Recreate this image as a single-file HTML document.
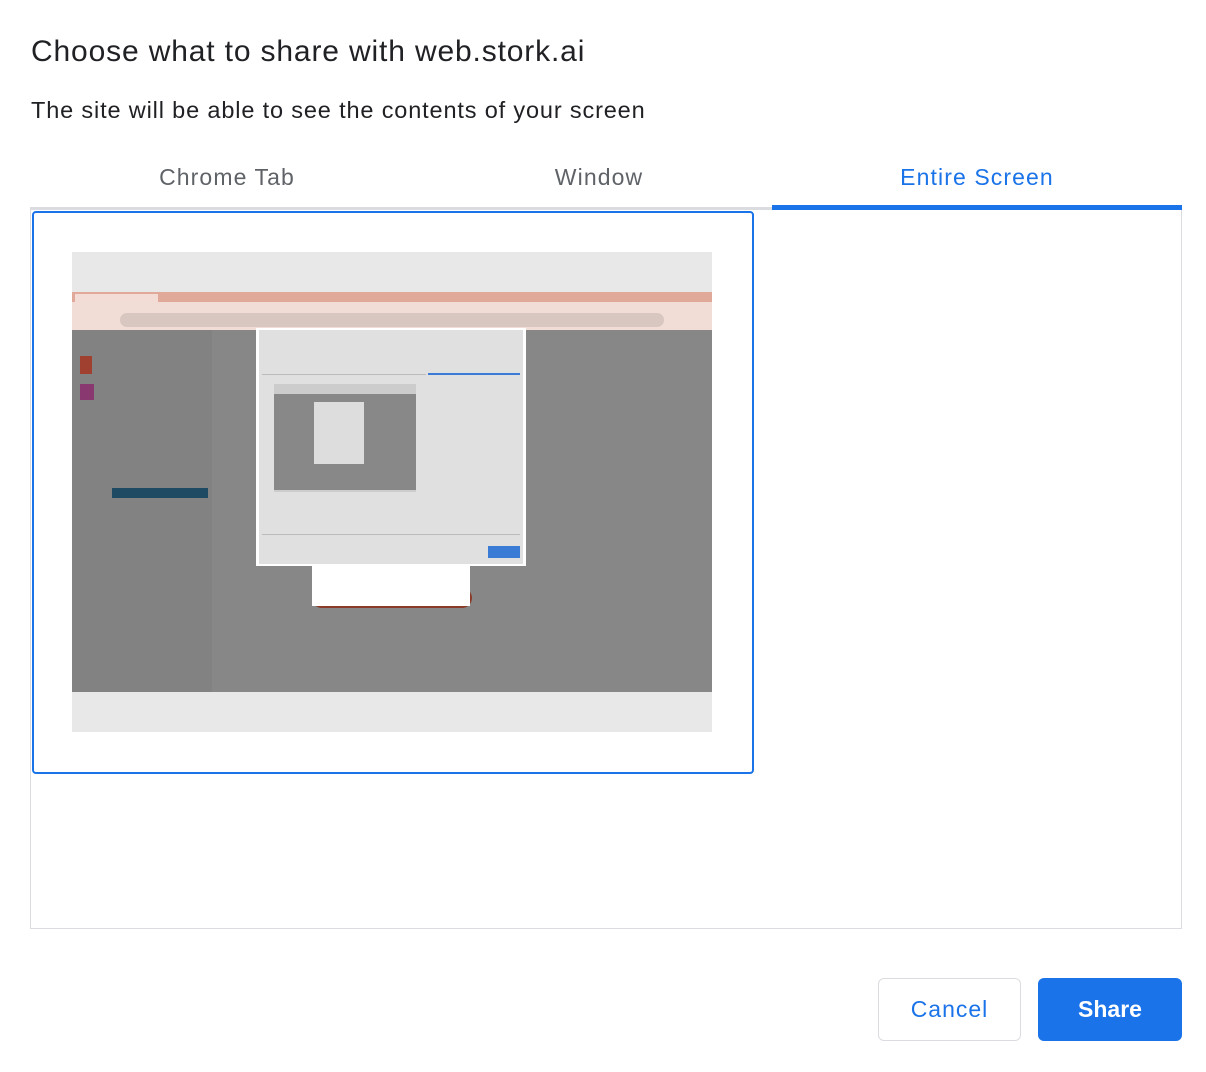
<!DOCTYPE html>
<html><head><meta charset="utf-8"><style>
body{margin:0;width:1206px;height:1072px;background:#fff;font-family:"Liberation Sans",sans-serif;position:relative;overflow:hidden}
.a{position:absolute}
h1{position:absolute;left:31px;top:35px;margin:0;font-size:30px;letter-spacing:0.85px;font-weight:normal;color:#202124}
.sub{left:31px;top:97px;font-size:23.5px;letter-spacing:0.85px;color:#202124}
.tab{top:164px;font-size:23px;letter-spacing:1.1px;color:#5f6368;width:400px;text-align:center}
</style></head><body>
<h1>Choose what to share with web.stork.ai</h1>
<div class="a sub">The site will be able to see the contents of your screen</div>
<div class="a tab" style="left:27px">Chrome Tab</div>
<div class="a tab" style="left:399px">Window</div>
<div class="a tab" style="left:777px;color:#1a73e8">Entire Screen</div>
<div class="a" style="left:30px;top:207px;width:742px;height:3px;background:#dadce0"></div>
<div class="a" style="left:772px;top:205px;width:410px;height:5px;background:#1a73e8"></div>
<div class="a" style="left:30px;top:210px;width:1150px;height:718px;border:1px solid #dadce0;border-top:none"></div>
<div class="a" style="left:32px;top:211px;width:718px;height:559px;border:2px solid #1a73e8;border-radius:4px"></div>
<div class="a" style="left:72px;top:252px;width:640px;height:480px;background:#e8e8e8;overflow:hidden">
 <div class="a" style="left:0;top:40px;width:640px;height:10px;background:#e1a99a"></div>
 <div class="a" style="left:3px;top:42px;width:83px;height:8px;background:#f3dcd6"></div>
 <div class="a" style="left:0;top:50px;width:640px;height:28px;background:#f2dcd6"></div>
 <div class="a" style="left:48px;top:61px;width:544px;height:14px;background:#d8c6c0;border-radius:7px"></div>
 <div class="a" style="left:0;top:78px;width:640px;height:362px;background:#878787"></div>
 <div class="a" style="left:0;top:78px;width:140px;height:362px;background:#828282"></div>
 <div class="a" style="left:8px;top:104px;width:12px;height:18px;background:#a04030"></div>
 <div class="a" style="left:8px;top:132px;width:14px;height:16px;background:#8a3870"></div>
 <div class="a" style="left:40px;top:236px;width:96px;height:10px;background:#1f4a64"></div>
 <div class="a" style="left:240px;top:336px;width:160px;height:20px;background:#8a3a28;border-radius:10px"></div>
 <div class="a" style="left:240px;top:300px;width:158px;height:54px;background:#fff"></div>
 <div class="a" style="left:184px;top:76px;width:270px;height:238px;background:#fff"></div>
 <div class="a" style="left:187px;top:78px;width:264px;height:234px;background:#e0e0e0"></div>
 <div class="a" style="left:190px;top:122px;width:164px;height:1px;background:#bbb"></div>
 <div class="a" style="left:356px;top:121px;width:92px;height:2px;background:#3a7bd5"></div>
 <div class="a" style="left:202px;top:132px;width:142px;height:108px;background:#ccc"></div>
 <div class="a" style="left:202px;top:142px;width:142px;height:96px;background:#888"></div>
 <div class="a" style="left:242px;top:150px;width:50px;height:62px;background:#ddd"></div>
 <div class="a" style="left:190px;top:282px;width:258px;height:1px;background:#bbb"></div>
 <div class="a" style="left:416px;top:294px;width:32px;height:12px;background:#3a7bd5"></div>
</div>
<div class="a" style="left:878px;top:978px;width:143px;height:63px;border:1px solid #dadce0;border-radius:6px;box-sizing:border-box;text-align:center;line-height:61px;font-size:23px;letter-spacing:1px;color:#1a73e8">Cancel</div>
<div class="a" style="left:1038px;top:978px;width:144px;height:63px;background:#1a73e8;border-radius:6px;text-align:center;line-height:63px;font-size:23px;color:#fff;font-weight:bold">Share</div>
</body></html>
